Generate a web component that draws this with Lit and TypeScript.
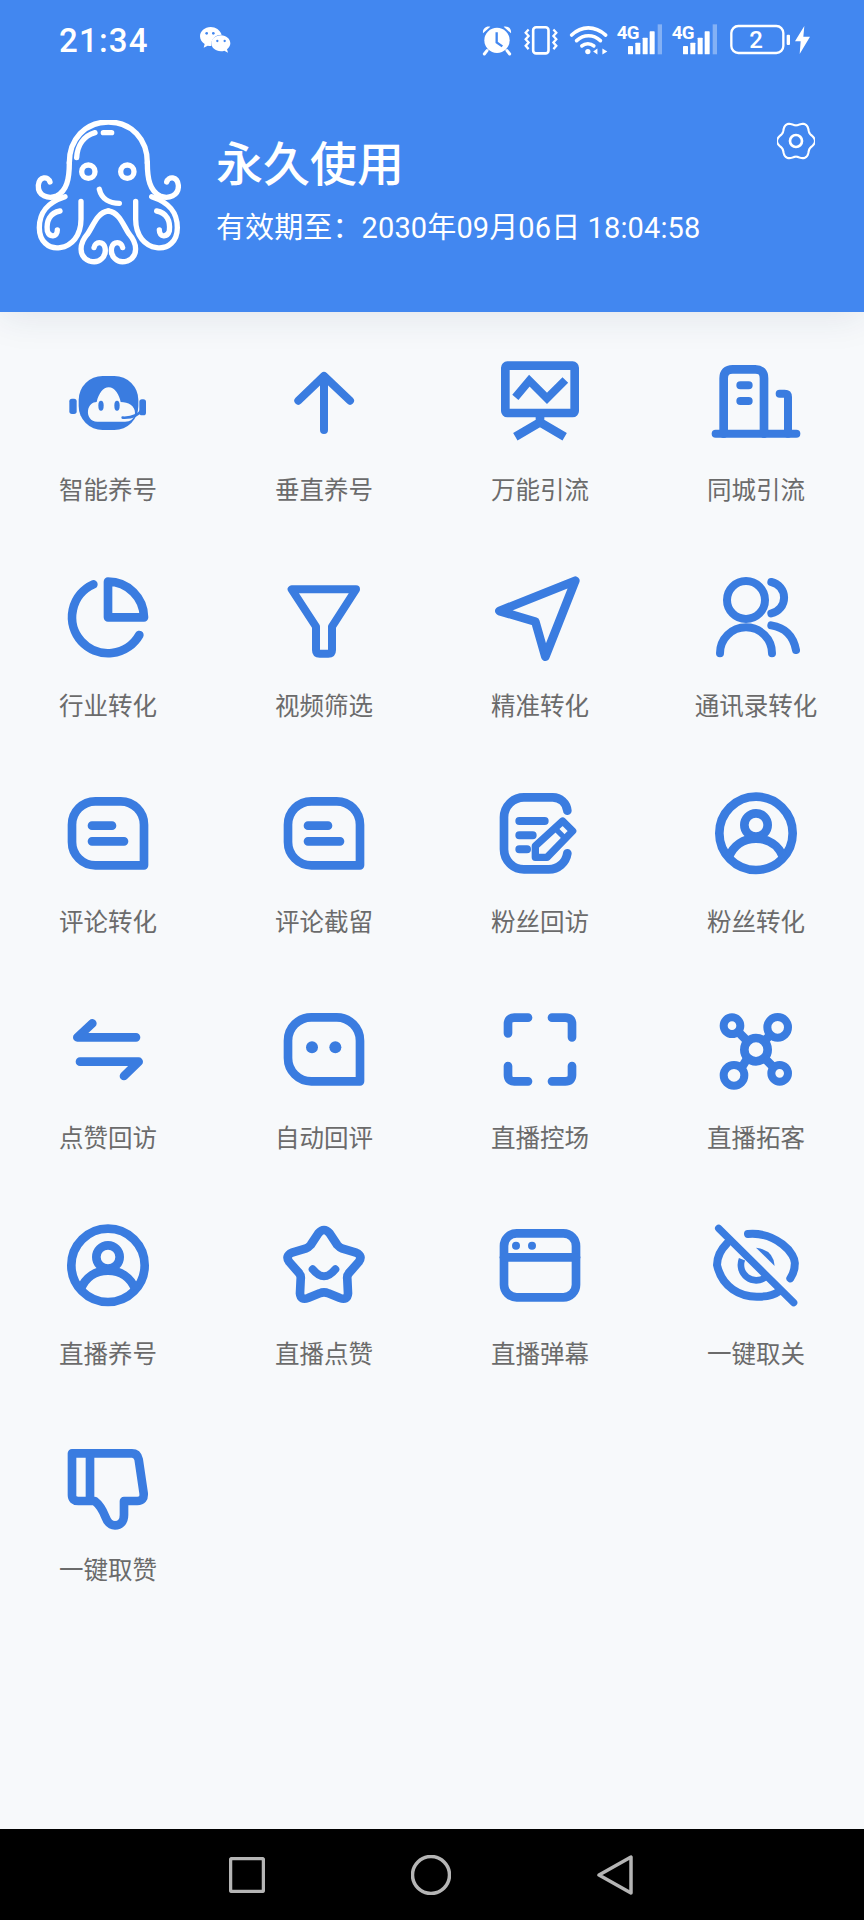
import { LitElement, css, html, svg } from 'lit'
import { customElement } from 'lit/decorators.js'

const bubble = svg`<path d="M286 94H362A70 70 0 0 1 432 164V286H286A70 70 0 0 1 216 216V164A70 70 0 0 1 286 94Z"/>`

const userCircle = svg`
  <circle cx="972" cy="190" r="110"/>
  <circle cx="972" cy="165" r="35"/>
  <path d="M890 262C905 225 935 206 972 206C1009 206 1039 225 1054 262" stroke-linecap="butt"/>`

const row = [63, 711, 69, 717, 75, 723]

const items = [
  { label: '智能养号', x: 204, y: row[0], icon: svg`
    <rect class="f" x="236" y="108" width="179" height="162" rx="72"/>
    <rect class="f" x="208" y="176" width="22" height="46" rx="8"/>
    <rect class="f" x="418" y="178" width="20" height="48" rx="8"/>
    <path class="b" d="M292 245C272 245 262 228 264 212C266 196 278 186 290 186C296 160 310 142 326 142C345 142 358 165 362 186C385 186 405 198 405 218C405 235 390 245 375 245Z"/>
    <ellipse class="f" cx="303" cy="197" rx="8" ry="15"/>
    <ellipse class="f" cx="351" cy="197" rx="8" ry="15"/>
    <path d="M368 233Q410 235 428 207" stroke-width="8"/>` },
  { label: '垂直养号', x: 852, y: row[0], icon: svg`
    <path d="M972 110V270M895 182L972 108L1050 182" stroke-width="24"/>` },
  { label: '万能引流', x: 204, y: row[0], icon: svg`
    <rect x="220" y="77" width="208" height="142" rx="6"/>
    <path d="M250 172L292 122L345 175L400 120" stroke-width="24" stroke-linecap="butt" stroke-linejoin="miter"/>
    <path d="M324 225V245M250 290L324 247L398 290" stroke-linecap="butt" stroke-linejoin="miter"/>` },
  { label: '同城引流', x: 852, y: row[0], icon: svg`
    <path d="M851 281H1093" stroke-width="24"/>
    <path d="M875 281V115Q875 88 902 88H970Q996 88 996 115V281"/>
    <path d="M925 136H950M925 183H950M1043 161H1058Q1068 161 1068 171V281" stroke-width="24"/>` },
  { label: '行业转化', x: 204, y: row[1], icon: svg`
    <path d="M280 733A108 108 0 1 0 418 885"/>
    <path d="M324 725V832H432A108 108 0 0 0 324 725Z"/>` },
  { label: '视频筛选', x: 852, y: row[1], icon: svg`
    <path d="M875 748H1068L996 860V930Q996 941 985 941H959Q948 941 948 930V860Z" stroke-width="24"/>` },
  { label: '精准转化', x: 204, y: row[1], icon: svg`
    <path d="M430 722L202 813L310 845L340 950Z"/>` },
  { label: '通讯录转化', x: 852, y: row[1], icon: svg`
    <circle cx="942" cy="780" r="57" stroke-width="24"/>
    <path d="M1018 726A48 48 0 0 1 1018 820M864 940A78 78 0 0 1 1020 940M1018 856Q1080 866 1092 930" stroke-width="24"/>` },
  { label: '评论转化', x: 204, y: row[2], icon: svg`${bubble}
    <path d="M276 167H336M276 214H372"/>` },
  { label: '评论截留', x: 204, y: row[2], icon: svg`${bubble}
    <path d="M276 167H336M276 214H372"/>` },
  { label: '粉丝回访', x: 204, y: row[2], icon: svg`
    <path d="M406 122A44 44 0 0 0 362 82H276A60 60 0 0 0 216 142V238A60 60 0 0 0 276 298H350A56 56 0 0 0 406 250"/>
    <path d="M262 153H338M262 196H302M262 238H285" stroke-width="24"/>
    <path d="M392 153L422 183L345 262H310V228Z" stroke-width="22"/>
    <path d="M370 176L400 206" stroke-width="16" stroke-linecap="butt"/>` },
  { label: '粉丝转化', x: 852, y: row[2], icon: userCircle },
  { label: '点赞回访', x: 204, y: row[3], icon: svg`
    <path d="M277 760L232 802H408M372 918L416 875H240"/>` },
  { label: '自动回评', x: 204, y: row[2], icon: svg`${bubble}
    <circle class="f" cx="288" cy="184" r="18"/>
    <circle class="f" cx="358" cy="184" r="18"/>` },
  { label: '直播控场', x: 204, y: row[3], icon: svg`
    <path d="M228 790V762Q228 743 247 743H288M360 743H400Q420 743 420 762V802M228 888V915Q228 934 247 934H288M420 888V915Q420 934 400 934H360"/>` },
  { label: '直播拓客', x: 852, y: row[3], icon: svg`
    <circle cx="972" cy="839" r="35"/>
    <circle cx="900" cy="767" r="25" stroke-width="24"/>
    <circle cx="1037" cy="772" r="31" stroke-width="24"/>
    <circle cx="906" cy="916" r="31" stroke-width="24"/>
    <circle cx="1043" cy="910" r="25" stroke-width="24"/>
    <path d="M918 785L947 814M1015 794L997 814M928 894L947 864M1025 892L997 864" stroke-linecap="butt"/>` },
  { label: '直播养号', x: 852, y: row[2], icon: userCircle },
  { label: '直播点赞', x: 852, y: row[4], icon: svg`
    <path d="M955 100Q972 80 989 100L1012 135Q1018 142 1028 146L1068 158Q1090 168 1076 186L1048 218Q1040 226 1042 238L1044 280Q1042 302 1020 294L985 280Q972 274 959 280L924 294Q902 302 900 280L902 238Q904 226 896 218L868 186Q854 168 876 158L916 146Q926 142 932 135Z"/>
    <path d="M938 208Q972 250 1006 208" stroke-width="24"/>` },
  { label: '直播弹幕', x: 204, y: row[4], icon: svg`
    <rect x="216" y="100" width="216" height="192" rx="38"/>
    <path d="M216 172H432"/>
    <circle class="f" cx="252" cy="137" r="12"/>
    <circle class="f" cx="300" cy="137" r="12"/>` },
  { label: '一键取关', x: 852, y: row[4], icon: svg`
    <path d="M860 85L1085 308" stroke-width="22"/>
    <path d="M885 130Q855 160 855 195C870 262 925 292 980 290Q1020 290 1040 275M948 102C1030 95 1095 160 1088 195Q1088 215 1075 235" stroke-width="24"/>
    <path class="f" d="M972 143Q1025 150 1028 198Z"/>
    <path d="M930 178A46 46 0 0 0 1000 232" stroke-width="20" stroke-linecap="butt"/>` },
  { label: '一键取赞', x: 204, y: row[5], icon: svg`
    <path d="M216 760H396Q412 760 416 778L431 880Q433 903 412 903H372V945C372 966 360 976 345 976C330 976 322 966 316 950C308 930 300 915 284 903H235Q216 903 216 885Z"/>
    <path d="M270 760V903" stroke-linecap="butt"/>` },
]

// r = 52 + 5cos(6a), lobes on the left and right like the reference
const gearPath = () => {
  const pts: string[] = []
  for (let i = 0; i < 120; i++) {
    const a = (i / 120) * Math.PI * 2
    const r = 52 + 5 * Math.cos(6 * a)
    pts.push(`${(1090 + r * Math.cos(a)).toFixed(1)} ${(422 + r * Math.sin(a)).toFixed(1)}`)
  }
  return `M${pts.join('L')}Z`
}

const signal = html`<svg class="st sig" width="46" height="32" viewBox="558 74 138 96">
  <text x="557" y="120" class="g">4G</text>
  <rect x="591" y="140" width="15" height="25" rx="2" fill="#fff"/>
  <rect x="613" y="130" width="15" height="35" rx="2" fill="#fff"/>
  <rect x="635" y="115" width="15" height="50" rx="2" fill="#fff"/>
  <rect x="656" y="96" width="15" height="69" rx="2" fill="#fff"/>
  <rect x="680" y="75" width="13" height="90" fill="#fff" opacity=".35"/>
</svg>`

const tentacles = svg`
  <path d="M208 490C208 540 200 575 170 590C145 600 113 590 115 558C118 530 145 530 150 548"/>
  <path d="M195 592C140 610 118 640 118 685C118 725 145 750 180 745C215 740 243 710 243 660V606"/>
  <path d="M180 635C150 640 138 665 142 695C148 715 172 715 172 692"/>
  <path d="M325 635C290 640 280 680 262 705C240 730 232 770 268 785C300 795 320 770 315 745C310 725 285 725 282 745"/>`

@customElement('app-root')
export class AppRoot extends LitElement {
  static styles = css`
    :host {
      display: flex;
      flex-direction: column;
      height: 1920px;
      background: #f7f9fb;
      font-family: Roboto, 'Noto Sans CJK SC', sans-serif;
    }
    .head {
      height: 312px;
      background: #4287f0;
      color: #fff;
      box-shadow: 0 4px 36px rgba(30, 50, 90, 0.1);
      position: relative;
    }
    .status {
      height: 80px;
      display: flex;
      align-items: center;
      padding: 0 54px 0 59px;
    }
    .time {
      font-size: 33px;
      font-weight: 500;
      letter-spacing: 1.2px;
      width: 141px;
    }
    .right {
      margin-left: auto;
      display: flex;
      align-items: center;
      gap: 12px;
    }
    .st { display: block; overflow: visible; flex: none; }
    .sig { margin-left: -3px; }
    .bolt { margin-left: -7px; }
    .g {
      font: 700 56px Roboto, sans-serif;
      fill: #fff;
      letter-spacing: -2px;
    }
    .bat {
      font: 500 72px Roboto, sans-serif;
      fill: #fff;
      text-anchor: middle;
    }
    .profile {
      display: flex;
      margin-top: 40px;
      padding-left: 35px;
    }
    .logo { display: block; flex: none; }
    .logo * { fill: none; stroke: #fff; stroke-width: 16; stroke-linecap: round; stroke-linejoin: round; }
    .info { margin-left: 35px; padding-top: 14px; }
    .title { font-size: 47px; font-weight: 500; line-height: 62px; }
    .sub { font-size: 29px; letter-spacing: 0.12px; line-height: 40px; margin-top: 12px; white-space: nowrap; }
    .gear { margin: 2px 49px 0 auto; flex: none; display: block; }
    .grid {
      flex: 1;
      display: grid;
      grid-template-columns: repeat(4, 216px);
      grid-auto-rows: 145px;
      row-gap: 71px;
      align-content: start;
      padding-top: 49px;
    }
    .item {
      display: flex;
      flex-direction: column;
      align-items: center;
    }
    .ico {
      display: block;
      overflow: visible;
      fill: none;
      stroke: #3a7ce0;
      stroke-width: 26;
      stroke-linecap: round;
      stroke-linejoin: round;
    }
    .ico .f { fill: #3a7ce0; stroke: none; }
    .ico .b { fill: #f7f9fb; stroke: none; }
    .label {
      margin-top: 33px;
      font-size: 24.5px;
      line-height: 33px;
      color: #6b6b6b;
      white-space: nowrap;
    }
    .nav {
      height: 91px;
      background: #000;
      display: flex;
      align-items: center;
      gap: 146px;
      padding-left: 229px;
    }
    .nav svg { display: block; fill: none; stroke: #b5b5b5; stroke-width: 3.5; stroke-linejoin: round; }
  `

  render() {
    return html`
      <div class="head">
        <div class="status">
          <span class="time">21:34</span>
          <svg class="st" width="30" height="26" viewBox="600 85 90 78">
            <path fill="#fff" d="M632 85C614 85 600 98 600 113C600 123 606 131 614 136L611 147L623 141C627 142 630 142 634 142C632 122 646 108 665 108C660 94 647 85 632 85Z"/>
            <path fill="#fff" d="M663 110C646 110 634 121 634 134C634 147 646 158 663 158C667 158 670 157 673 156L684 162L681 152C687 147 691 141 691 134C691 121 679 110 663 110Z"/>
            <g fill="#4287f0"><circle cx="620" cy="104" r="4"/><circle cx="640" cy="104" r="4"/><circle cx="652" cy="127" r="3.5"/><circle cx="674" cy="127" r="3.5"/></g>
          </svg>
          <div class="right">
            <svg class="st" width="30" height="30" viewBox="155 78 90 90">
              <circle cx="200" cy="124" r="38" fill="#fff"/>
              <path d="M199 100V130L216 142" fill="none" stroke="#4287f0" stroke-width="7"/>
              <path d="M158 103C156 90 166 80 180 83ZM242 103C244 90 234 80 220 83Z" fill="#fff"/>
              <path d="M170 155L162 165M230 155L238 165" stroke="#fff" stroke-width="9" stroke-linecap="round"/>
            </svg>
            <svg class="st" width="34" height="30" viewBox="282 78 104 92" fill="none" stroke="#fff">
              <rect x="310" y="85" width="47" height="80" rx="9" stroke-width="8"/>
              <path d="M296 92L287 102L296 112L287 122L296 132L287 142L296 152M372 92L381 102L372 112L381 122L372 132L381 142L372 152" stroke-width="7"/>
            </svg>
            <svg class="st" width="38" height="30" viewBox="420 75 115 90" fill="none" stroke="#fff" stroke-linecap="round">
              <path d="M425 105C455 76 495 76 528 105M440 122C462 102 490 102 512 122M456 138C466 129 482 129 492 138" stroke-width="11"/>
              <circle cx="474" cy="155" r="8" fill="#fff" stroke="none"/>
              <path d="M490 155L503 146V164ZM533 155L518 146V164Z" fill="#fff" stroke="none"/>
            </svg>
            ${signal}
            ${signal}
            <svg class="st" width="60" height="30" viewBox="893 78 180 90">
              <rect x="897" y="81" width="156" height="81" rx="21" fill="none" stroke="#fff" stroke-width="7"/>
              <text class="bat" x="971" y="148">2</text>
              <rect x="1063" y="107" width="10" height="31" rx="3" fill="#fff"/>
            </svg>
            <svg class="st bolt" width="15" height="28" viewBox="1090 80 45 84">
              <path d="M1118 80L1090 126H1107L1104 164L1135 112H1115Z" fill="#fff"/>
            </svg>
          </div>
        </div>
        <div class="profile">
          <svg class="logo" width="146" height="146" viewBox="105 362 438 438">
            <path d="M230 475C232 440 250 410 285 400M310 400H335"/>
            <circle cx="265" cy="517" r="20"/>
            <circle cx="382" cy="517" r="20"/>
            <path d="M298 570C305 600 330 612 358 612"/>
            <path d="M208 490C208 420 255 368 325 368C395 368 442 420 442 490"/>
            ${tentacles}
            <g transform="translate(650 0) scale(-1 1)">${tentacles}</g>
          </svg>
          <div class="info">
            <div class="title">永久使用</div>
            <div class="sub">有效期至：2030年09月06日 18:04:58</div>
          </div>
          <svg class="gear" width="38" height="38" viewBox="1033 365 114 114" fill="none" stroke="#fff">
            <path d=${gearPath()} stroke-width="6.5" stroke-linejoin="round"/>
            <circle cx="1090" cy="422" r="18" stroke-width="8"/>
          </svg>
        </div>
      </div>
      <div class="grid">
        ${items.map(
          (it) => html`<div class="item">
            <svg class="ico" width="80" height="80" viewBox="${it.x} ${it.y} 240 240">${it.icon}</svg>
            <div class="label">${it.label}</div>
          </div>`
        )}
      </div>
      <div class="nav">
        <svg width="36" height="36" viewBox="0 0 36 36"><rect x="1.5" y="1.5" width="33" height="33" rx="2"/></svg>
        <svg width="40" height="40" viewBox="0 0 40 40"><circle cx="20" cy="20" r="18.5"/></svg>
        <svg width="36" height="40" viewBox="0 0 36 40"><path d="M34 2V38L2 20Z"/></svg>
      </div>
    `
  }
}

declare global {
  interface HTMLElementTagNameMap {
    'app-root': AppRoot
  }
}
